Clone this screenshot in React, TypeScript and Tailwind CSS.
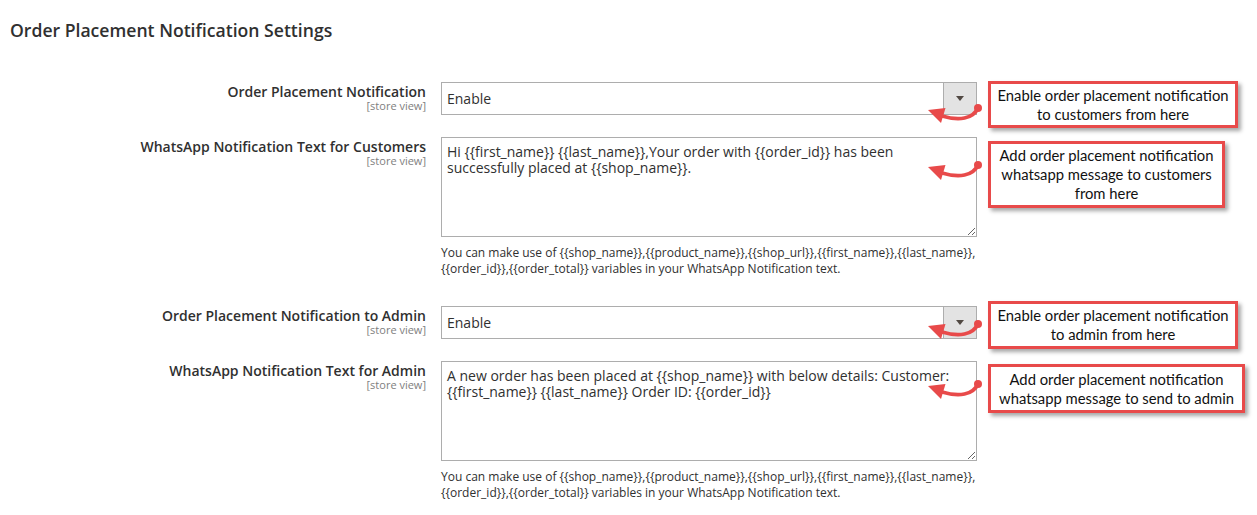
import React from "react";

const RED = "#e84a4a";

function Arrow({ top }: { top: number }) {
  return (
    <svg
      className="absolute pointer-events-none"
      style={{ left: 485, top: top - 6 }}
      width="58"
      height="24"
      viewBox="0 0 58 24"
    >
      <path d="M52 6 C47 17 33 19 16 14" fill="none" stroke={RED} strokeWidth="3.8" strokeLinecap="round" />
      <circle cx="52" cy="6" r="4" fill={RED} />
      <path d="M2 8 L19.5 6 L15 21 Z" fill={RED} />
    </svg>
  );
}

function Callout({
  top,
  width,
  height,
  lines,
}: {
  top: number;
  width: number;
  height: number;
  lines: string[];
}) {
  return (
    <div
      className="absolute bg-white border-[3px] border-[#e84a4a] shadow-[3px_3px_4px_rgba(0,0,0,0.35)] flex flex-col items-center justify-center text-[14.8px] leading-[19px] text-[#111] text-center"
      style={{ left: 547, top, width, height, fontFamily: "Lato, 'Open Sans', sans-serif" }}
    >
      {lines.map((l) => (
        <div key={l}>{l}</div>
      ))}
    </div>
  );
}

function Label({ text }: { text: string }) {
  return (
    <div className="text-right pt-[2px]">
      <div className="text-[14px] font-semibold leading-[15px] text-[#303030]">{text}</div>
      <div className="text-[11px] leading-[14px] text-[#808080]">[store view]</div>
    </div>
  );
}

function SelectBox() {
  return (
    <div className="flex h-[33px] w-[536px] border border-[#adadad] bg-white">
      <div className="flex-1 flex items-center pl-[5px] text-[14px] text-[#303030]">Enable</div>
      <div className="w-[33px] bg-[#e3e3e3] border-l border-[#adadad] flex items-center justify-center">
        <div className="w-0 h-0 border-l-[4px] border-r-[4px] border-t-[5px] border-l-transparent border-r-transparent border-t-[#514943]" />
      </div>
    </div>
  );
}

function Area({ value }: { value: string }) {
  return (
    <textarea
      readOnly
      defaultValue={value}
      className="block w-[536px] h-[100px] border border-[#adadad] bg-white px-[5px] pt-[6px] text-[14px] leading-[16px] text-[#303030] outline-none resize-y"
    />
  );
}

function Note() {
  return (
    <div className="mt-[8px] text-[12px] leading-[16px] text-[#303030]">
      You can make use of {"{{shop_name}},{{product_name}},{{shop_url}},{{first_name}},{{last_name}},"}
      <br />
      {"{{order_id}},{{order_total}}"} variables in your WhatsApp Notification text.
    </div>
  );
}

export default function App() {
  return (
    <div
      className="w-[1257px] h-[515px] bg-white overflow-hidden"
      style={{ fontFamily: "'Open Sans', sans-serif" }}
    >
      <h2 className="pl-[10px] pt-[19px] text-[17.6px] font-semibold leading-[22px] text-[#303030]">
        Order Placement Notification Settings
      </h2>

      <div className="grid grid-cols-[426px_536px] gap-x-[15px] mt-[41px]">
        <Label text="Order Placement Notification" />
        <div className="relative">
          <SelectBox />
          <Arrow top={26} />
          <Callout top={-1} width={250} height={47} lines={["Enable order placement notification", "to customers from here"]} />
        </div>
      </div>

      <div className="grid grid-cols-[426px_536px] gap-x-[15px] mt-[22px]">
        <Label text="WhatsApp Notification Text for Customers" />
        <div className="relative">
          <Area value={"Hi {{first_name}} {{last_name}},Your order with {{order_id}} has been successfully placed at {{shop_name}}."} />
          <Note />
          <Arrow top={28} />
          <Callout
            top={4}
            width={237}
            height={67}
            lines={["Add order placement notification", "whatsapp message to customers", "from here"]}
          />
        </div>
      </div>

      <div className="grid grid-cols-[426px_536px] gap-x-[15px] mt-[29px]">
        <Label text="Order Placement Notification to Admin" />
        <div className="relative">
          <SelectBox />
          <Arrow top={18} />
          <Callout top={-5} width={250} height={48} lines={["Enable order placement notification", "to admin from here"]} />
        </div>
      </div>

      <div className="grid grid-cols-[426px_536px] gap-x-[15px] mt-[22px]">
        <Label text="WhatsApp Notification Text for Admin" />
        <div className="relative">
          <Area value={"A new order has been placed at {{shop_name}} with below details: Customer: {{first_name}} {{last_name}} Order ID: {{order_id}}"} />
          <Note />
          <Arrow top={23} />
          <Callout
            top={3}
            width={257}
            height={49}
            lines={["Add order placement notification", "whatsapp message to send to admin"]}
          />
        </div>
      </div>
    </div>
  );
}
